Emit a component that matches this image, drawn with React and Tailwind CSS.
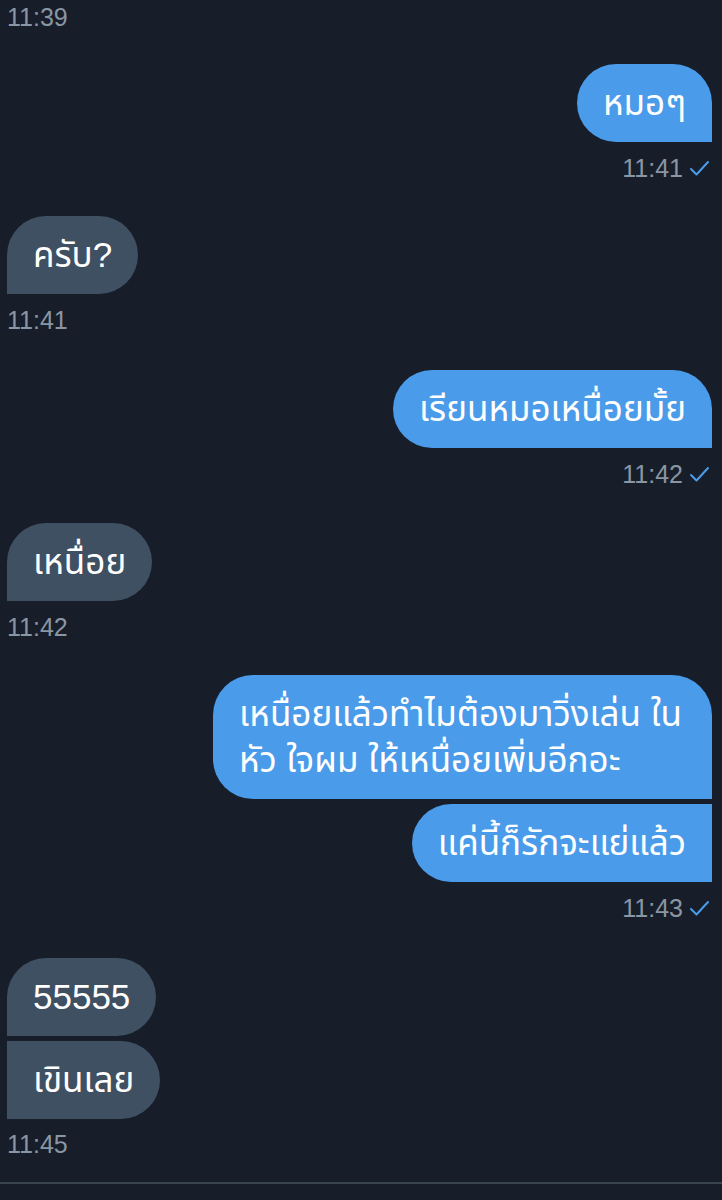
import React from "react";

const FONT = { fontFamily: '"Liberation Sans", "Noto Sans Thai", "Noto Sans Thai Looped", "Noto Sans", sans-serif' };

function Check() {
  return (
    <svg width="21" height="18" viewBox="0 0 21 18" className="ml-[6px]">
      <path d="M2 10 L7.5 15.5 L19 3" fill="none" stroke="#4a9be9" strokeWidth="2" strokeLinecap="round" strokeLinejoin="round" />
    </svg>
  );
}

function Time({ t, right, check }) {
  return (
    <div className={`flex items-center h-[30px] text-[25px] leading-[30px] text-[#8a96a3] ${right ? "justify-end pr-[2px]" : ""}`}>
      <span>{t}</span>
      {check && <Check />}
    </div>
  );
}

function Sent({ children, corners = "rounded-[40px] rounded-br-none", mt = "" }) {
  return (
    <div className={`flex justify-end ${mt}`}>
      <div className={`bg-[#4a9be9] text-white text-[35px] leading-[46px] px-[26px] py-4 ${corners}`}>{children}</div>
    </div>
  );
}

function Recv({ children, corners = "rounded-[40px] rounded-bl-none", mt = "" }) {
  return (
    <div className={`flex justify-start ${mt}`}>
      <div className={`bg-[#3f5062] text-white text-[35px] leading-[46px] px-[26px] py-4 ${corners}`}>{children}</div>
    </div>
  );
}

export default function App() {
  return (
    <div className="w-[722px] h-[1200px] bg-[#171e2a] overflow-hidden" style={FONT}>
      <div className="pl-[7px] pr-[10px]">
        <div className="pt-[2px]"><Time t="11:39" /></div>
        <Sent mt="mt-[32px]">หมอๆ</Sent>
        <div className="mt-[11px]"><Time t="11:41" right check /></div>

        <Recv mt="mt-[33px]">ครับ?</Recv>
        <div className="mt-[11px]"><Time t="11:41" /></div>

        <Sent mt="mt-[35px]">เรียนหมอเหนื่อยมั้ย</Sent>
        <div className="mt-[11px]"><Time t="11:42" right check /></div>

        <Recv mt="mt-[34px]">เหนื่อย</Recv>
        <div className="mt-[11px]"><Time t="11:42" /></div>

        <Sent mt="mt-[33px]">
          <div className="whitespace-nowrap pr-[4px]">
            เหนื่อยแล้วทำไมต้องมาวิ่งเล่น ใน
            <br />
            หัว ใจผม ให้เหนื่อยเพิ่มอีกอะ
          </div>
        </Sent>
        <Sent mt="mt-[5px]" corners="rounded-l-[40px]">แค่นี้ก็รักจะแย่แล้ว</Sent>
        <div className="mt-[11px]"><Time t="11:43" right check /></div>

        <Recv mt="mt-[35px]" corners="rounded-tl-[40px] rounded-r-[40px]">55555</Recv>
        <Recv mt="mt-[5px]" corners="rounded-r-[40px]">เขินเลย</Recv>
        <div className="mt-[10px]"><Time t="11:45" /></div>
      </div>
      <div className="mt-[23px] h-[2px] bg-[#3a4350]" />
    </div>
  );
}
